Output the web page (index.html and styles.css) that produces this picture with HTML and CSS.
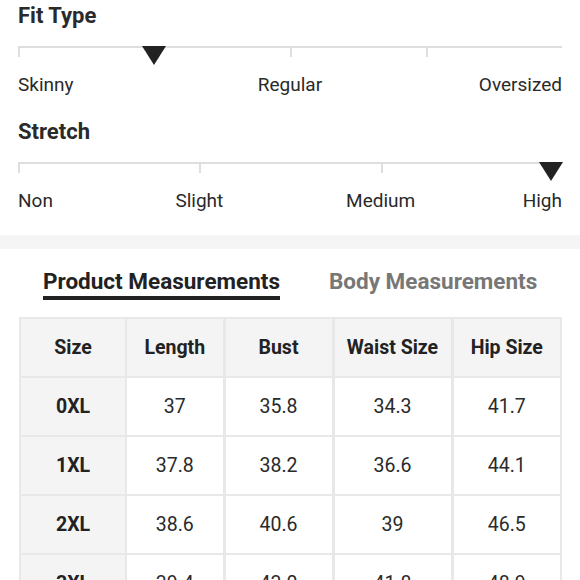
FILE: index.html
```html
<!DOCTYPE html>
<html>
<head>
<meta charset="utf-8">
<link rel="stylesheet" href="styles.css">
</head>
<body>
<div class="fit">
  <section class="scale">
    <h2 class="scale-title">Fit Type</h2>
    <div class="track">
      <span class="seg"></span><span class="seg"></span><span class="seg"></span><span class="seg"></span>
      <span class="marker marker-q1"></span>
    </div>
    <div class="labels labels-3">
      <span class="l-left">Skinny</span>
      <span class="l-center">Regular</span>
      <span class="l-right">Oversized</span>
    </div>
  </section>
  <section class="scale scale-2">
    <h2 class="scale-title">Stretch</h2>
    <div class="track">
      <span class="seg"></span><span class="seg"></span><span class="seg"></span>
      <span class="marker marker-end"></span>
    </div>
    <div class="labels labels-6">
      <span class="l-left c1">Non</span>
      <span class="l-center c23">Slight</span>
      <span class="l-center c45">Medium</span>
      <span class="l-right c6">High</span>
    </div>
  </section>
</div>
<div class="band"></div>
<div class="tabs">
  <span class="tab tab-active">Product Measurements</span>
  <span class="tab">Body Measurements</span>
</div>
<div class="table-wrap">
<table class="sizes">
  <colgroup>
    <col class="w1"><col class="w2"><col class="w3"><col class="w4"><col class="w5">
  </colgroup>
  <thead>
    <tr><th>Size</th><th>Length</th><th>Bust</th><th>Waist Size</th><th>Hip Size</th></tr>
  </thead>
  <tbody>
    <tr><th>0XL</th><td>37</td><td>35.8</td><td>34.3</td><td>41.7</td></tr>
    <tr><th>1XL</th><td>37.8</td><td>38.2</td><td>36.6</td><td>44.1</td></tr>
    <tr><th>2XL</th><td>38.6</td><td>40.6</td><td>39</td><td>46.5</td></tr>
    <tr><th>3XL</th><td>39.4</td><td>43.0</td><td>41.8</td><td>48.9</td></tr>
  </tbody>
</table>
</div>
</body>
</html>
```

FILE: styles.css
```css
html, body {
  margin: 0;
  padding: 0;
  background: #fff;
}
body {
  font-family: Roboto, "Liberation Sans", sans-serif;
  color: #222;
  width: 580px;
  height: 580px;
  overflow: hidden;
}
.fit {
  padding: 4px 18px 0 18px;
}
.scale-title {
  margin: 0;
  font-size: 22px;
  line-height: 24px;
  font-weight: 700;
  color: #2a2a2a;
}
.scale-2 {
  margin-top: 24px;
}
.track {
  position: relative;
  margin-top: 18px;
  display: flex;
  border-top: 2px solid #dedede;
  height: 9px;
}
.seg {
  flex: 1;
  border-left: 2px solid #dedede;
}
.seg:last-of-type {
  border-right: 2px solid #dedede;
}
.marker {
  position: absolute;
  top: -2px;
  width: 0;
  height: 0;
  border-left: 12px solid transparent;
  border-right: 12px solid transparent;
  border-top: 19px solid #222;
}
.marker-q1 {
  left: calc(25% - 12px);
}
.marker-end {
  right: -1px;
}
.labels {
  margin-top: 17px;
  display: grid;
  font-size: 19px;
  line-height: 22px;
  color: #2a2a2a;
}
.labels-3 {
  grid-template-columns: 1fr 1fr 1fr;
}
.labels-6 {
  grid-template-columns: repeat(6, 1fr);
}
.l-left { text-align: left; white-space: nowrap; }
.l-center { text-align: center; white-space: nowrap; }
.l-right { text-align: right; white-space: nowrap; }
.c1 { grid-column: 1; }
.c23 { grid-column: 2 / span 2; }
.c45 { grid-column: 4 / span 2; }
.c6 { grid-column: 6; }
.band {
  margin-top: 23px;
  height: 14px;
  background: #f5f5f5;
}
.tabs {
  display: flex;
  padding-left: 43px;
  gap: 49px;
  margin-top: 19px;
}
.tab {
  font-size: 22.5px;
  line-height: 26px;
  font-weight: 700;
  color: #777;
  padding-bottom: 2px;
}
.tab-active {
  color: #222;
  border-bottom: 4px solid #222;
}
.table-wrap {
  padding: 17px 0 0 19px;
}
.sizes {
  border-collapse: collapse;
  width: 543px;
  table-layout: fixed;
  font-size: 19.5px;
}
.w1 { width: 106px; }
.w2 { width: 98px; }
.w3 { width: 109px; }
.w4 { width: 119px; }
.w5 { width: 109px; }
.sizes th, .sizes td {
  height: 57px;
  padding: 0;
  text-align: center;
  vertical-align: middle;
  border: 2px solid #e8e8e8;
}
.sizes td + td, .sizes th + td, .sizes th + th {
  border-left-width: 3px;
}
.sizes tr > :nth-child(2) {
  border-left-width: 2px;
}
.sizes th {
  font-weight: 700;
  background: #f4f4f4;
  color: #222;
}
.sizes td {
  font-weight: 400;
  background: #fff;
  color: #2a2a2a;
}
```
